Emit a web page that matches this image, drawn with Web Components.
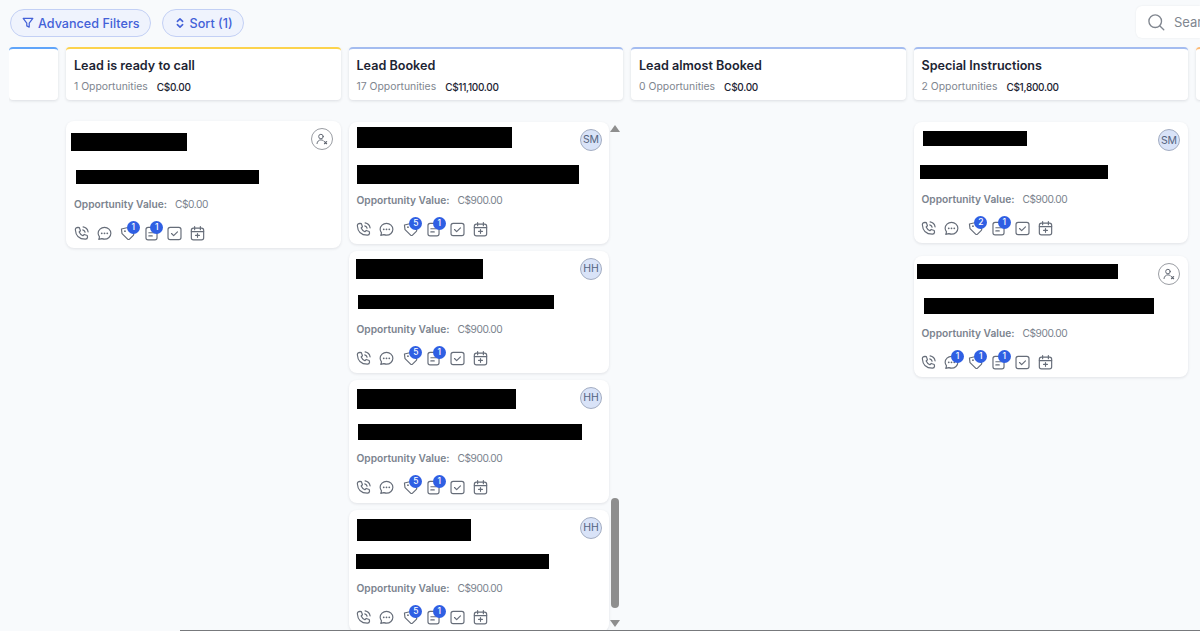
<!doctype html>
<html>
<head>
<meta charset="utf-8">
<style>
  html, body { margin: 0; height: 100%; overflow: hidden; }
  body { background: #f8fafc; font-family: "Inter", "Liberation Sans", sans-serif; }
</style>
</head>
<body>
<pipeline-page>
  <pill-button slot="tools" icon="filter">Advanced Filters</pill-button>
  <pill-button slot="tools" icon="sort">Sort (1)</pill-button>
  <search-box slot="search"></search-box>

  <pipeline-column accent="#60a5fa" hidden-head style="--col-w:49px"></pipeline-column>

  <pipeline-column name="Lead is ready to call" count="1 Opportunities" total="C$0.00" accent="#fcd34d" pad="21">
    <opp-card value="C$0.00" gap="12" tail="5" counts="0,0,1,1">
      <redact-bar slot="name" w="116" h="18" top="12" left="-3"></redact-bar>
      <redact-bar slot="contact" w="183" h="14" top="19" left="2"></redact-bar>
      <user-chip slot="owner" style="--owner-right:8px"></user-chip>
    </opp-card>
  </pipeline-column>

  <pipeline-column name="Lead Booked" count="17 Opportunities" total="C$11,100.00" accent="#a4bcf0" pad="22" scroll>
    <opp-card value="C$900.00" gap="8" tail="5" counts="0,0,5,1" narrow>
      <redact-bar slot="name" w="155" h="21" top="5" left="0"></redact-bar>
      <redact-bar slot="contact" w="222" h="19" top="17" left="0"></redact-bar>
      <user-chip slot="owner" initials="SM"></user-chip>
    </opp-card>
    <opp-card value="C$900.00" gap="12" tail="5" counts="0,0,5,1" narrow>
      <redact-bar slot="name" w="127" h="20" top="8" left="-1"></redact-bar>
      <redact-bar slot="contact" w="196" h="14" top="16" left="1"></redact-bar>
      <user-chip slot="owner" initials="HH"></user-chip>
    </opp-card>
    <opp-card value="C$900.00" gap="10" tail="6" counts="0,0,5,1" narrow>
      <redact-bar slot="name" w="159" h="20" top="9" left="0"></redact-bar>
      <redact-bar slot="contact" w="224" h="16" top="15" left="1"></redact-bar>
      <user-chip slot="owner" initials="HH"></user-chip>
    </opp-card>
    <opp-card value="C$900.00" gap="11" tail="5" counts="0,0,5,1" narrow>
      <redact-bar slot="name" w="114" h="22" top="9" left="0"></redact-bar>
      <redact-bar slot="contact" w="193" h="15" top="13" left="-1"></redact-bar>
      <user-chip slot="owner" initials="HH"></user-chip>
    </opp-card>
  </pipeline-column>

  <pipeline-column name="Lead almost Booked" count="0 Opportunities" total="C$0.00" accent="#a4bcf0"></pipeline-column>

  <pipeline-column name="Special Instructions" count="2 Opportunities" total="C$1,800.00" accent="#a4bcf0" pad="22" card-gap="13">
    <opp-card value="C$900.00" gap="12" tail="5" counts="0,0,2,1">
      <redact-bar slot="name" w="104" h="15" top="9" left="1"></redact-bar>
      <redact-bar slot="contact" w="188" h="14" top="19" left="-2"></redact-bar>
      <user-chip slot="owner" initials="SM" style="--owner-right:8px"></user-chip>
    </opp-card>
    <opp-card value="C$900.00" gap="11" tail="5" counts="0,1,1,1">
      <redact-bar slot="name" w="201" h="15" top="8" left="-5"></redact-bar>
      <redact-bar slot="contact" w="230" h="16" top="19" left="2"></redact-bar>
      <user-chip slot="owner" style="--owner-right:8px"></user-chip>
    </opp-card>
  </pipeline-column>

  <pipeline-column accent="#fdba74" hidden-head></pipeline-column>
</pipeline-page>

<script>
const ICONS = {
  filter: '<path d="M2.500 2.800h11L9.400 8.200v4.500l-2.800-1.400V8.200z"/>',
  sort: '<path d="M5 6.200 8 3.300l3 2.900M5 9.800l3 2.900 3-2.900"/>',
  search: '<circle cx="7.300" cy="7.300" r="5.600"/><path d="m11.500 11.500 3.400 3.400"/>',
  phone: '<path d="M4.600 2.200 6 2.500l1 2.900-1.200 1.200c.7 1.600 1.900 2.800 3.500 3.500l1.300-1.200 2.800 1 .3 1.500c-.1 1.200-1 2-2.200 1.900C6 13.300 2.600 9.900 2.200 4.400 2.200 3.200 3.200 2.200 4.600 2.200z"/><path d="M9.200 4.600c1.100.3 1.900 1.100 2.200 2.200M9.500 1.800c2.400.4 4.300 2.300 4.700 4.700"/>',
  message: '<path d="M8 2.300c3.300 0 6 2.400 6 5.500s-2.700 5.500-6 5.500c-.9 0-1.700-.2-2.500-.5l-2.900.7.700-2.400C2.600 10.100 2 9 2 7.800c0-3.100 2.700-5.500 6-5.500z"/><path d="M5.400 7.800h.01M8 7.800h.01M10.600 7.800h.01" stroke-width="1.700"/>',
  tag: '<path d="M2.300 3.800 7.400 2.600c.4-.1.800 0 1.100.3l5 5c.5.5.5 1.300 0 1.800l-3.600 3.600c-.5.5-1.300.5-1.800 0l-5-5c-.3-.3-.4-.7-.4-1.100z"/><path d="M5.600 5.800h.01" stroke-width="1.700"/>',
  note: '<rect x="2.800" y="2.200" width="10.400" height="11.800" rx="2"/><path d="M5.500 7.300h5M5.500 10.300h3.200"/>',
  task: '<rect x="1.900" y="2.200" width="12.200" height="11.600" rx="2"/><path d="m5.200 8 2 2 3.600-3.600"/>',
  calendar: '<rect x="2.200" y="3" width="11.600" height="11" rx="2"/><path d="M2.200 6.200h11.600M5.300 1.500v3M10.700 1.500v3M8 8v3.600M6.200 9.800h3.600"/>',
  assign: '<circle cx="6.800" cy="5.200" r="2.600"/><path d="M2.300 13.200c.3-2.600 2.200-4.200 4.500-4.200 1 0 1.900.3 2.600.8"/><path d="m10.800 11 2.500 2.400m0-2.400-2.500 2.400" stroke-width="1.300"/>'
};

function icon(name, size, stroke = 1.2) {
  return `<svg width="${size}" height="${size}" viewBox="0 0 16 16" fill="none" stroke="currentColor" stroke-width="${stroke}" stroke-linecap="round" stroke-linejoin="round">${ICONS[name]}</svg>`;
}

class PipelinePage extends HTMLElement {
  constructor() {
    super();
    this.attachShadow({ mode: "open" }).innerHTML = `
      <style>
        :host { display: flex; flex-direction: column; height: 631px; overflow: hidden; position: relative; }
        .top { display: flex; align-items: flex-start; justify-content: space-between; height: 47px; flex: none; box-sizing: border-box; padding: 6px 0 0 10px; }
        .tools { display: flex; gap: 11px; padding-top: 3px; }
        .board { flex: 1; min-height: 0; margin-left: 9px; overflow: hidden; }
        .track { display: flex; gap: 8px; height: 100%; width: max-content; }
        .edge { position: absolute; left: 180px; right: 0; bottom: 0; height: 1px; background: #77797c; }
      </style>
      <div class="top">
        <div class="tools"><slot name="tools"></slot></div>
        <slot name="search"></slot>
      </div>
      <div class="board"><div class="track"><slot></slot></div></div>
      <div class="edge"></div>`;
  }
}

class PillButton extends HTMLElement {
  constructor() {
    super();
    this.attachShadow({ mode: "open" }).innerHTML = `
      <style>
        :host { display: inline-flex; align-items: center; gap: 3px; height: 28px; box-sizing: border-box; padding: 0 10px; border: 1px solid #c3d0f5; border-radius: 14px; background: #eff3fd; color: #4361d8; font-size: 12.6px; font-weight: 500; white-space: nowrap; }
        svg { display: block; flex: none; }
      </style>
      ${icon(this.getAttribute("icon"), 14, this.getAttribute("icon") === "sort" ? 1.8 : 1.4)}<slot></slot>`;
  }
}

class SearchBox extends HTMLElement {
  constructor() {
    super();
    this.attachShadow({ mode: "open" }).innerHTML = `
      <style>
        :host { display: flex; align-items: center; gap: 9px; width: 64px; height: 32px; box-sizing: border-box; padding-left: 11px; background: #fff; border-radius: 6px 0 0 6px; box-shadow: 0 0 2px rgba(16,24,40,.08); color: #80868f; font-size: 13px; overflow: hidden; }
        svg { flex: none; }
      </style>
      ${icon("search", 18, 1.2)}<span>Search</span>`;
  }
}

class PipelineColumn extends HTMLElement {
  constructor() {
    super();
    const empty = this.hasAttribute("hidden-head");
    const pad = this.getAttribute("pad") || 21;
    const cardGap = this.getAttribute("card-gap") || 7;
    const bar = this.hasAttribute("scroll") ? `<div class="bar"><i class="up"></i><b></b><i class="down"></i></div>` : "";
    this.attachShadow({ mode: "open" }).innerHTML = `
      <style>
        :host { display: flex; flex-direction: column; flex: none; width: var(--col-w, 274.5px); position: relative; }
        .head { height: 53px; box-sizing: border-box; padding: 8px 8px 0; background: #fff; border-top: 2px solid ${this.getAttribute("accent")}; border-radius: 4px; box-shadow: 0 1px 3px rgba(16,24,40,.12); overflow: hidden; }
        h3 { margin: 0; font-size: 12.6px; line-height: 18px; font-weight: 600; color: #1d2433; white-space: nowrap; }
        .meta { display: flex; gap: 9px; margin-top: 4px; font-size: 10.4px; line-height: 16px; color: #80868f; white-space: nowrap; }
        .meta strong { font-size: 10px; letter-spacing: -.3px; font-weight: 500; color: #1d2433; }
        .cards { display: flex; flex-direction: column; gap: ${cardGap}px; padding-top: ${pad}px; min-height: 0; }
        .bar { position: absolute; top: 75px; right: 0; bottom: 0; width: 15px; }
        .bar b { position: absolute; left: 3px; top: 376px; width: 8px; height: 110px; border-radius: 4px; background: #8e8e8e; }
        .bar i { position: absolute; left: 2px; width: 0; height: 0; border-left: 5px solid transparent; border-right: 5px solid transparent; }
        .up { top: 3px; border-bottom: 7px solid #8e8e8e; }
        .down { top: 498px; border-top: 7px solid #8e8e8e; }
      </style>
      <div class="head">${empty ? "" : `
        <h3>${this.getAttribute("name")}</h3>
        <div class="meta"><span>${this.getAttribute("count")}</span><strong>${this.getAttribute("total")}</strong></div>`}
      </div>
      <div class="cards"><slot></slot></div>${bar}`;
  }
}

class OppCard extends HTMLElement {
  constructor() {
    super();
    const counts = (this.getAttribute("counts") || "0,0,0,0").split(",");
    const names = ["phone", "message", "tag", "note", "task", "calendar"];
    const row = names.map((n, i) => {
      const c = +counts[i] || 0;
      return `<span class="act">${icon(n, 17, 1.1)}${c ? `<em>${c}</em>` : ""}</span>`;
    }).join("");
    this.attachShadow({ mode: "open" }).innerHTML = `
      <style>
        :host { display: block; position: relative; flex: none; box-sizing: border-box; width: ${this.hasAttribute("narrow") ? "260px" : "100%"}; padding: 0 8px ${this.getAttribute("tail")}px; background: #fff; border-radius: 8px; box-shadow: 0 1px 3px rgba(16,24,40,.1); }
        .value { display: flex; gap: 8px; margin-top: ${this.getAttribute("gap")}px; font-size: 10.2px; line-height: 16px; color: #7b838e; white-space: nowrap; }
        .value strong { font-weight: 600; }
        .value span { letter-spacing: -.45px; }
        .acts { display: flex; gap: 7.4px; height: 20px; align-items: center; margin: 11px 0 0 -1px; color: #666d79; }
        .act { position: relative; width: 16px; height: 16px; }
        svg { display: block; margin: 0 -.5px; }
        em { position: absolute; left: 7px; top: -4px; width: 13px; height: 13px; border-radius: 50%; background: #2f5fe3; color: #fff; font-size: 8.5px; font-style: normal; font-weight: 500; line-height: 13px; text-align: center; }
      </style>
      <slot name="name"></slot>
      <slot name="contact"></slot>
      <div class="value"><strong>Opportunity Value:</strong><span>${this.getAttribute("value")}</span></div>
      <div class="acts">${row}</div>
      <slot name="owner"></slot>`;
  }
}

class RedactBar extends HTMLElement {
  constructor() {
    super();
    const a = n => this.getAttribute(n);
    this.attachShadow({ mode: "open" }).innerHTML = `
      <style>:host { display: block; width: ${a("w")}px; height: ${a("h")}px; margin: ${a("top")}px 0 0 ${a("left")}px; background: #000; }</style>`;
  }
}

class UserChip extends HTMLElement {
  constructor() {
    super();
    const text = this.getAttribute("initials");
    this.attachShadow({ mode: "open" }).innerHTML = `
      <style>
        :host { position: absolute; top: 7px; right: var(--owner-right, 6.5px); width: 22px; height: 22px; box-sizing: border-box; display: flex; align-items: center; justify-content: center; border-radius: 50%; border: 1px solid ${text ? "#a3adc2" : "#9a9da3"}; background: ${text ? "#d9e3f8" : "#fff"}; color: #55647f; font-size: 10.5px; }
        svg { display: block; color: #5f6570; }
      </style>
      ${text || icon("assign", 14, 1.1)}`;
  }
}

customElements.define("pipeline-page", PipelinePage);
customElements.define("pill-button", PillButton);
customElements.define("search-box", SearchBox);
customElements.define("pipeline-column", PipelineColumn);
customElements.define("opp-card", OppCard);
customElements.define("redact-bar", RedactBar);
customElements.define("user-chip", UserChip);
</script>
</body>
</html>
